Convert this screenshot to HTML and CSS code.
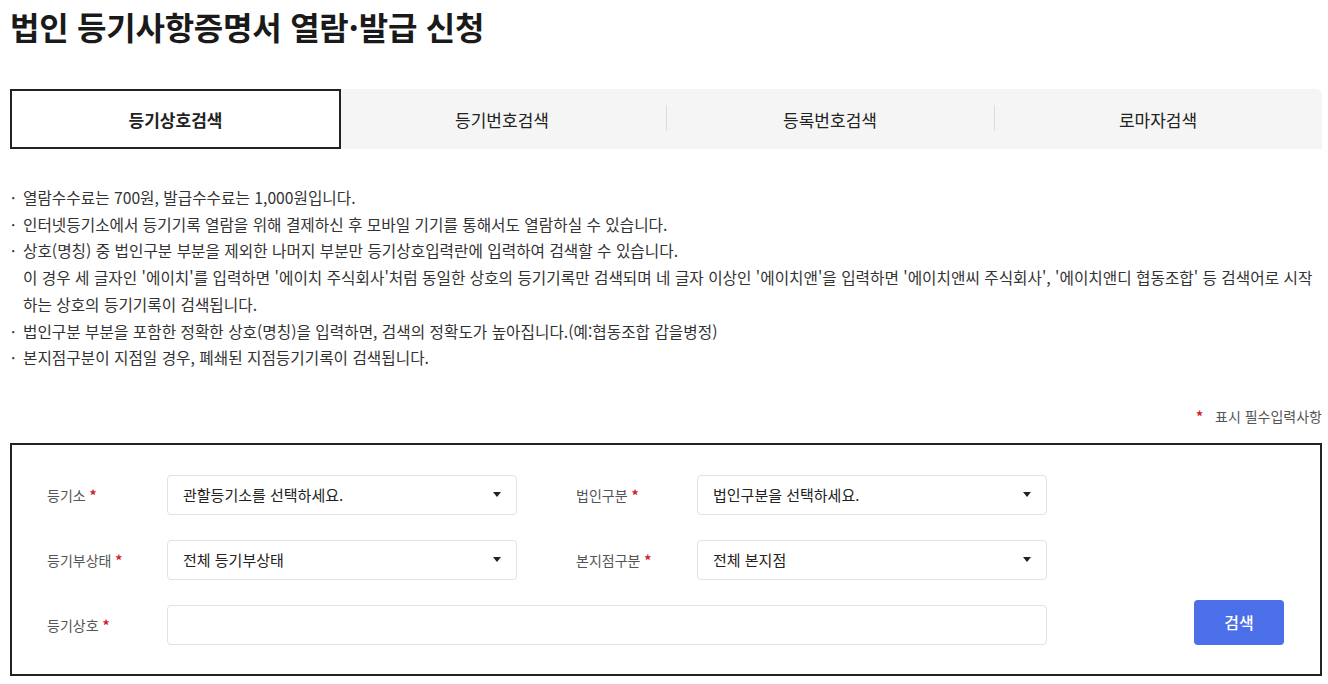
FILE: index.html
```html
<!DOCTYPE html>
<html lang="ko">
<head>
  <meta charset="UTF-8" />
  <meta name="viewport" content="width=device-width, initial-scale=1.0"/>
  <title>법인 등기사항증명서 열람·발급 신청</title>
  <link rel="stylesheet" href="styles.css">
</head>
<body>
  <div class="page">
    <h1 class="page-title">법인 등기사항증명서 열람·발급 신청</h1>

    <div class="tabs">
      <div class="tab active">등기상호검색</div>
      <div class="tab">등기번호검색</div>
      <div class="tab">등록번호검색</div>
      <div class="tab">로마자검색</div>
    </div>

    <ul class="notes">
      <li>열람수수료는 700원, 발급수수료는 1,000원입니다.</li>
      <li>인터넷등기소에서 등기기록 열람을 위해 결제하신 후 모바일 기기를 통해서도 열람하실 수 있습니다.</li>
      <li>상호(명칭) 중 법인구분 부분을 제외한 나머지 부분만 등기상호입력란에 입력하여 검색할 수 있습니다.<br>
        이 경우 세 글자인 '에이치'를 입력하면 '에이치 주식회사'처럼 동일한 상호의 등기기록만 검색되며 네 글자 이상인 '에이치앤'을 입력하면 '에이치앤씨 주식회사', '에이치앤디 협동조합' 등 검색어로 시작하는 상호의 등기기록이 검색됩니다.</li>
      <li>법인구분 부분을 포함한 정확한 상호(명칭)을 입력하면, 검색의 정확도가 높아집니다.(예:협동조합 갑을병정)</li>
      <li>본지점구분이 지점일 경우, 폐쇄된 지점등기기록이 검색됩니다.</li>
    </ul>

    <div class="required-note"><span class="star">*</span> 표시 필수입력사항</div>

    <form class="search-box" onsubmit="return false">
      <label class="field-label">등기소 <span class="star">*</span></label>
      <div class="select">관할등기소를 선택하세요.<span class="caret"></span></div>
      <label class="field-label second">법인구분 <span class="star">*</span></label>
      <div class="select">법인구분을 선택하세요.<span class="caret"></span></div>
      <div></div>

      <label class="field-label">등기부상태 <span class="star">*</span></label>
      <div class="select">전체 등기부상태<span class="caret"></span></div>
      <label class="field-label second">본지점구분 <span class="star">*</span></label>
      <div class="select">전체 본지점<span class="caret"></span></div>
      <div></div>

      <label class="field-label">등기상호 <span class="star">*</span></label>
      <input class="text-input wide" type="text">
      <button class="btn-search" type="submit">검색</button>
    </form>
  </div>
</body>
</html>
```

FILE: styles.css
```css
body {
  font-family: "Noto Sans CJK KR", "Noto Sans", sans-serif;
  background-color: #ffffff;
  color: #222;
  margin: 0;
  padding: 0;
}
.page {
  padding: 0 6px 0 10px;
}
.page-title {
  margin: 0;
  padding-top: 4px;
  font-size: 32px;
  font-weight: 700;
  line-height: 44px;
  color: #1a1a1a;
  letter-spacing: -0.25px;
}
.tabs {
  display: grid;
  grid-template-columns: repeat(4, 1fr);
  margin-top: 41px;
  height: 60px;
  background-color: #f5f5f5;
  border-top-right-radius: 6px;
}
.tab {
  position: relative;
  display: flex;
  align-items: center;
  justify-content: center;
  font-size: 17px;
  color: #222;
}
.tab + .tab::before {
  content: "";
  position: absolute;
  left: 0;
  top: 16px;
  height: 26px;
  border-left: 1px solid #dcdcdc;
}
.tab.active + .tab::before {
  display: none;
}
.tab.active {
  background-color: #ffffff;
  border: 2px solid #222;
  font-weight: 700;
  margin-right: -3px;
  z-index: 1;
}
.notes {
  list-style: none;
  margin: 36px 0 0;
  padding: 0 0 0 13px;
  font-size: 15.7px;
  line-height: 26.7px;
  color: #333;
}
.notes li {
  position: relative;
}
.notes li::before {
  content: "·";
  position: absolute;
  left: -12px;
  top: 0;
}
.required-note {
  margin-top: 34px;
  text-align: right;
  font-size: 14px;
  color: #555;
}
.required-note .star {
  margin-right: 8px;
}
.star {
  color: #d0202a;
  font-weight: 700;
}
.search-box {
  display: grid;
  grid-template-columns: 120px 350px 180px 350px 1fr;
  grid-auto-rows: 40px;
  row-gap: 25px;
  align-items: center;
  margin: 17px 0 8px;
  padding: 30px 36px 29px 35px;
  border: 2px solid #222;
}
.field-label {
  font-size: 14px;
  color: #555;
}
.field-label.second {
  padding-left: 59px;
}
.select,
.text-input {
  box-sizing: border-box;
  height: 40px;
  display: flex;
  align-items: center;
  justify-content: space-between;
  padding: 0 15px 0 15px;
  border: 1px solid #e2e2e2;
  border-radius: 4px;
  background: #fff;
  font-size: 15px;
  color: #222;
}
.text-input.wide {
  grid-column: span 3;
  font-family: inherit;
  outline: none;
}
.caret {
  width: 0;
  height: 0;
  border-left: 4.5px solid transparent;
  border-right: 4.5px solid transparent;
  border-top: 5px solid #222;
}
.btn-search {
  justify-self: end;
  width: 90px;
  height: 45px;
  margin-top: -5px;
  border: none;
  border-radius: 4px;
  background-color: #4a6fe8;
  color: #fff;
  font-family: inherit;
  font-size: 16px;
  font-weight: 500;
  cursor: pointer;
}
```
